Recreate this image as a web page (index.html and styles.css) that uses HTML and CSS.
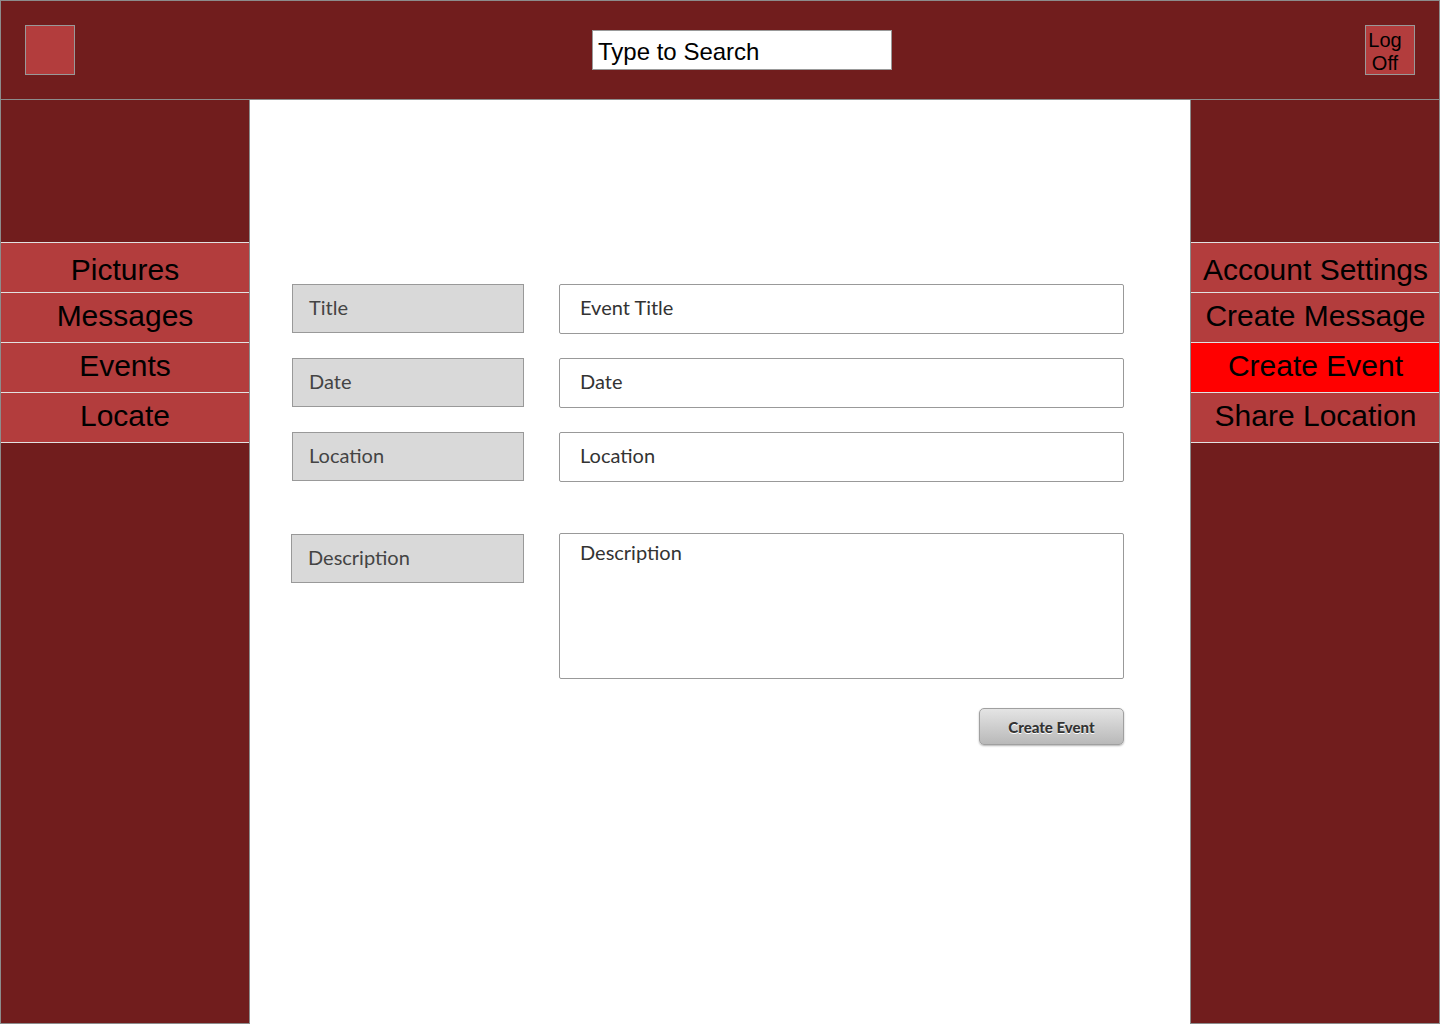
FILE: index.html
```html
<!DOCTYPE html>
<html lang="en">
<head>
<meta charset="utf-8">
<title>Create Event</title>
<link rel="stylesheet" href="styles.css">
</head>
<body>
<div class="app">
  <header class="topbar">
    <div class="logo"></div>
    <div class="search">Type to Search</div>
    <div class="logoff">Log Off</div>
  </header>
  <div class="main">
    <aside class="sidebar sidebar-left">
      <nav class="nav">
        <div class="nav-item">Pictures</div>
        <div class="nav-item">Messages</div>
        <div class="nav-item">Events</div>
        <div class="nav-item">Locate</div>
      </nav>
    </aside>
    <section class="content">
      <form class="event-form">
        <div class="label">Title</div>
        <div class="field">Event Title</div>
        <div class="label">Date</div>
        <div class="field">Date</div>
        <div class="label">Location</div>
        <div class="field">Location</div>
        <div class="label label-desc">Description</div>
        <div class="field field-desc">Description</div>
        <div class="actions">
          <div class="btn">Create Event</div>
        </div>
      </form>
    </section>
    <aside class="sidebar sidebar-right">
      <nav class="nav">
        <div class="nav-item">Account Settings</div>
        <div class="nav-item">Create Message</div>
        <div class="nav-item active">Create Event</div>
        <div class="nav-item">Share Location</div>
      </nav>
    </aside>
  </div>
</div>
</body>
</html>
```

FILE: styles.css
```css
* { box-sizing: border-box; }
html, body { margin: 0; padding: 0; }
body {
  width: 1440px;
  height: 1024px;
  overflow: hidden;
  font-family: "Liberation Sans", Arial, sans-serif;
  background: #fff;
}
.app {
  width: 1440px;
  height: 1024px;
  display: flex;
  flex-direction: column;
}
.topbar {
  height: 100px;
  flex: 0 0 100px;
  background: #711d1d;
  border: 1px solid #8c8c8c;
  display: flex;
  align-items: center;
  padding: 0 24px;
}
.logo {
  width: 50px;
  height: 50px;
  background: #b33d3d;
  border: 1px solid #999;
}
.search {
  margin-left: 517px;
  width: 300px;
  height: 40px;
  background: #fff;
  border: 1px solid #999;
  font-size: 24px;
  color: #000;
  line-height: 38px;
  padding: 2px 0 0 5px;
}
.logoff {
  margin-left: auto;
  width: 50px;
  height: 50px;
  background: #b33d3d;
  border: 1px solid #999;
  font-size: 20px;
  line-height: 23px;
  text-align: center;
  padding: 3px 10px 0 0;
  color: #000;
}
.main {
  flex: 1;
  display: flex;
  min-height: 0;
}
.sidebar {
  width: 250px;
  flex: 0 0 250px;
  background: #711d1d;
  border-bottom: 1px solid #8c8c8c;
  padding-top: 142px;
}
.sidebar-left {
  border-left: 1px solid #8c8c8c;
  border-right: 1px solid #8c8c8c;
}
.sidebar-right {
  border-left: 1px solid #8c8c8c;
  border-right: 1px solid #8c8c8c;
}
.nav {
  display: flex;
  flex-direction: column;
}
.nav-item {
  height: 50px;
  background: #b33d3d;
  border-top: 1px solid #e2e2e2;
  font-size: 30px;
  color: #000;
  display: flex;
  align-items: center;
  justify-content: center;
  white-space: nowrap;
  padding-bottom: 3px;
}
.nav-item:first-child {
  padding-top: 4px;
  padding-bottom: 0;
}
.nav-item:last-child {
  height: 51px;
  border-bottom: 1px solid #e2e2e2;
}
.nav-item.active {
  background: #ff0000;
}
.sidebar-right .nav-item { padding-left: 1px; }
.content {
  flex: 1;
  background: #fff;
  padding: 184px 0 0 42px;
}
.event-form {
  display: grid;
  grid-template-columns: 232px 565px;
  column-gap: 35px;
  row-gap: 24px;
  font-family: Lato, "Open Sans", sans-serif;
}
.label {
  height: 49px;
  background: #d9d9d9;
  border: 1px solid #999;
  display: flex;
  align-items: center;
  padding: 0 0 4px 16px;
  font-size: 20px;
  color: #444;
}
.field {
  height: 50px;
  background: #fff;
  border: 1px solid #999;
  border-radius: 2px;
  display: flex;
  align-items: center;
  padding: 0 0 4px 20px;
  font-size: 20px;
  color: #333;
}
.label-desc {
  margin-top: 28px;
  margin-left: -1px;
}
.field-desc {
  margin-top: 27px;
  height: 146px;
  align-items: flex-start;
  padding-top: 6px;
}
.actions {
  grid-column: 2;
  display: flex;
  justify-content: flex-end;
  margin-top: 5px;
}
.btn {
  width: 145px;
  height: 37px;
  border: 1px solid #a0a0a0;
  border-radius: 5px;
  background: linear-gradient(#e4e4e4, #b9b9b9);
  box-shadow: 0 1px 2px rgba(0,0,0,0.3);
  font-size: 15px;
  font-weight: 900;
  color: #333;
  text-shadow: 0 1px 0 #fff;
  display: flex;
  align-items: center;
  justify-content: center;
}
```
